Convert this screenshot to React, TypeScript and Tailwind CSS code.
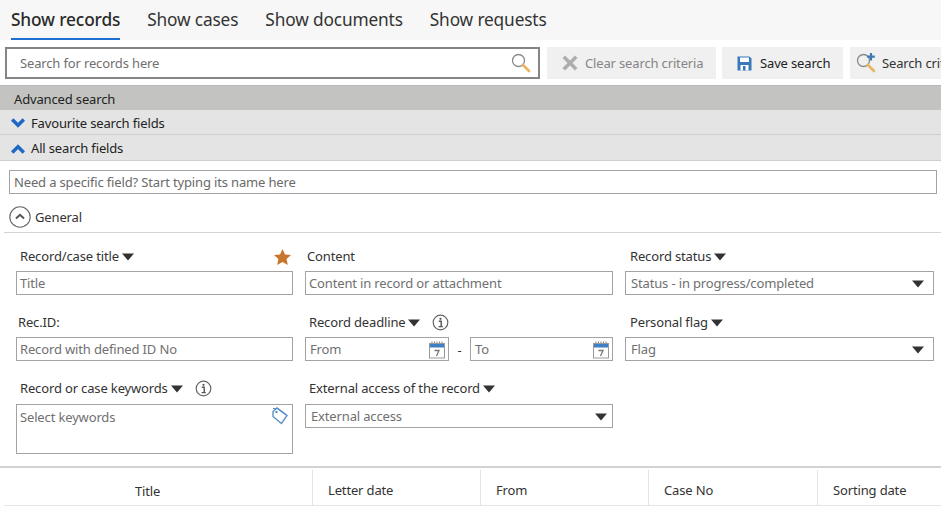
import React from "react";

const Caret = ({ className = "" }: { className?: string }) => (
  <svg width="12" height="8" viewBox="0 0 12 8" className={`shrink-0 ${className}`}>
    <path d="M0 0.5H12L6 7.5Z" fill="#333" />
  </svg>
);

const Info = () => (
  <svg width="17" height="17" viewBox="0 0 17 17" fill="none">
    <circle cx="8.5" cy="8.5" r="7.3" stroke="#666" strokeWidth="1.2" />
    <circle cx="8.5" cy="4.8" r="1.1" fill="#555" />
    <path d="M6.8 7.2H9.2V12.2M6.6 12.6H10.8" stroke="#555" strokeWidth="1.4" />
  </svg>
);

const Calendar = () => (
  <svg width="16" height="18" viewBox="0 0 16 18" fill="none" className="shrink-0">
    <path d="M3 0.5V3M5.5 0.5V3M8 0.5V3M10.5 0.5V3M13 0.5V3" stroke="#777" strokeWidth="0.9" />
    <rect x="0.5" y="2.5" width="15" height="4" fill="#3f7fc6" />
    <rect x="0.5" y="2.5" width="15" height="14.5" stroke="#999" strokeWidth="1" />
    <path d="M5.5 9.5H10L7.5 15" stroke="#777" strokeWidth="1.3" />
  </svg>
);

const Magnifier = ({ plus = false }: { plus?: boolean }) => (
  <svg width="20" height="20" viewBox="0 0 20 20" fill="none" className="shrink-0">
    <circle cx="7.5" cy="7.5" r="6" stroke="#8a8a8a" strokeWidth="1.3" />
    <path d="M12 12L18 18" stroke="#e9b45c" strokeWidth="2.6" strokeLinecap="round" />
    {plus && <path d="M15 0V7.5M11.2 3.7H18.8" stroke="#3c78b8" strokeWidth="2.2" />}
  </svg>
);

const Field = ({
  label,
  after,
  children,
}: {
  label: string;
  after?: React.ReactNode;
  children: React.ReactNode;
}) => (
  <div className="flex flex-col">
    <div className="mb-[3px] flex h-6 items-center gap-[3px] pl-[4px] pt-[1px]">
      <span>{label}</span>
      {after}
    </div>
    {children}
  </div>
);

const Box = ({ text, right }: { text: string; right?: React.ReactNode }) => (
  <div className="flex h-6 items-center justify-between border border-[#a3a3a3] bg-white pl-[3px] pr-[9px] pt-[1px] text-[#707070]">
    <span>{text}</span>
    {right}
  </div>
);

const SelectBox = ({ text }: { text: string }) => (
  <div className="flex h-6 items-center justify-between border border-[#a3a3a3] bg-white pl-[5px] pr-[9px] pt-[1px] text-[#707070]">
    <span>{text}</span>
    <Caret />
  </div>
);

export default function App() {
  return (
    <div
      className="h-[530px] w-[941px] overflow-hidden bg-white text-[13px] leading-none tracking-[-0.15px] text-[#333]"
      style={{ fontFamily: '"Noto Sans", "Open Sans", sans-serif' }}
    >
      <div className="flex h-10 gap-[27px] bg-[#f7f7f7] pl-[11px] text-[17.3px]">
        <div className="flex h-10 items-center border-b-2 border-[#1f6fd0] pt-[1px] font-medium text-[#2a2a2a]">Show records</div>
        <div className="flex h-10 items-center">Show cases</div>
        <div className="flex h-10 items-center">Show documents</div>
        <div className="flex h-10 items-center">Show requests</div>
      </div>

      <div className="flex h-[45px] items-center pl-[5px]">
        <div className="flex h-[32px] w-[535px] items-center justify-between border-2 border-[#858585] pl-[13px] pr-[7px] pt-[1px] text-[#707070]">
          <span>Search for records here</span>
          <Magnifier />
        </div>
        <div className="ml-[7px] flex h-[32px] w-[169px] items-center gap-[7px] bg-[#f0f0f0] pl-[15px] pt-[1px] text-[#858585]">
          <svg width="16" height="16" viewBox="0 0 16 16" className="shrink-0">
            <path d="M3 0.5L8 5.5L13 0.5L15.5 3L10.5 8L15.5 13L13 15.5L8 10.5L3 15.5L0.5 13L5.5 8L0.5 3Z" fill="#aeaeae" />
          </svg>
          <span>Clear search criteria</span>
        </div>
        <div className="ml-[6px] flex h-[32px] w-[121px] items-center gap-2 bg-[#f0f0f0] pl-[15px] pt-[1px] text-[#222]">
          <svg width="15" height="15" viewBox="0 0 15 15" className="shrink-0">
            <path d="M0.5 0.5H12.5L14.5 2.5V14.5H0.5Z" fill="#3b78b9" />
            <rect x="3" y="1.5" width="9" height="4.5" fill="#fff" />
            <rect x="3.5" y="9" width="8" height="5.5" fill="#fff" />
            <rect x="6" y="10" width="2.5" height="4.5" fill="#3b78b9" />
          </svg>
          <span>Save search</span>
        </div>
        <div className="ml-[7px] flex h-[32px] flex-1 items-center gap-[6px] overflow-hidden whitespace-nowrap bg-[#f0f0f0] pl-[6px] pt-[1px]">
          <Magnifier plus />
          <span>Search criteria</span>
        </div>
      </div>

      <div className="flex h-[25px] items-center border-t border-[#b8b8b5] bg-[#c3c4c1] pl-[14px] pt-[2px] text-[#222]">Advanced search</div>
      <div className="flex h-[25px] items-center gap-[6px] border-b border-[#cfcfcf] bg-[#e4e4e4] pl-[11px] pt-[2px] text-[#222]">
        <svg width="14" height="10" viewBox="0 0 14 10" fill="none" className="shrink-0">
          <path d="M1.2 1.5L7 7.3L12.8 1.5" stroke="#1d69c4" strokeWidth="3.4" />
        </svg>
        <span>Favourite search fields</span>
      </div>
      <div className="flex h-[26px] items-center gap-[6px] border-b border-[#cfcfcf] bg-[#e4e4e4] pl-[11px] pt-[2px] text-[#222]">
        <svg width="14" height="10" viewBox="0 0 14 10" fill="none" className="shrink-0">
          <path d="M1.2 8.5L7 2.7L12.8 8.5" stroke="#1d69c4" strokeWidth="3.4" />
        </svg>
        <span>All search fields</span>
      </div>

      <div className="ml-[9px] mt-[9px] flex h-6 w-[928px] items-center border border-[#a3a3a3] pl-1 pt-[1px] text-[#6a6a6a]">
        Need a specific field? Start typing its name here
      </div>

      <div className="ml-1 mt-[12px] flex h-[27px] items-start gap-1 border-b border-[#d4d4d4] pl-[5px]">
        <svg width="22" height="22" viewBox="0 0 22 22" fill="none" className="shrink-0">
          <circle cx="11" cy="11" r="10.2" stroke="#666" strokeWidth="1.1" />
          <path d="M7 12.5L11 8.8L15 12.5" stroke="#555" strokeWidth="2" />
        </svg>
        <span className="pt-[5px] text-[#333]">General</span>
      </div>

      <div className="grid grid-cols-[277px_308px_309px] gap-x-3 gap-y-[15px] pl-4 pt-[11px]">
        <Field
          label="Record/case title"
          after={
            <>
              <Caret />
              <svg width="17" height="16" viewBox="0 0 17 16" className="ml-auto mr-[2px] shrink-0">
                <path d="M8.5 0L11 5.4L17 6.1L12.6 10.1L13.8 16L8.5 13L3.2 16L4.4 10.1L0 6.1L6 5.4Z" fill="#c8752e" />
              </svg>
            </>
          }
        >
          <Box text="Title" />
        </Field>
        <div className="flex flex-col">
          <div className="mb-[3px] flex h-6 items-center pl-[2px] pt-[1px]">Content</div>
          <Box text="Content in record or attachment" />
        </div>
        <div className="flex flex-col">
          <div className="mb-[3px] flex h-6 items-center gap-[3px] pl-[5px] pt-[1px]">
            <span>Record status</span>
            <Caret />
          </div>
          <SelectBox text="Status - in progress/completed" />
        </div>

        <div className="flex flex-col">
          <div className="mb-[3px] flex h-6 items-center pl-[2px] pt-[1px]">Rec.ID:</div>
          <Box text="Record with defined ID No" />
        </div>
        <Field
          label="Record deadline"
          after={
            <>
              <Caret />
              <span className="ml-[9px] flex"><Info /></span>
            </>
          }
        >
          <div className="flex items-center">
            <div className="flex h-6 w-[144px] items-center justify-between border border-[#a3a3a3] pl-1 pr-[3px] pt-[1px] text-[#707070]">
              <span>From</span>
              <Calendar />
            </div>
            <span className="w-[21px] pt-[3px] text-center">-</span>
            <div className="flex h-6 w-[143px] items-center justify-between border border-[#a3a3a3] pl-1 pr-[3px] pt-[1px] text-[#707070]">
              <span>To</span>
              <Calendar />
            </div>
          </div>
        </Field>
        <div className="flex flex-col">
          <div className="mb-[3px] flex h-6 items-center gap-[3px] pl-[5px] pt-[1px]">
            <span>Personal flag</span>
            <Caret />
          </div>
          <SelectBox text="Flag" />
        </div>

        <Field
          label="Record or case keywords"
          after={
            <>
              <Caret />
              <span className="ml-[9px] flex"><Info /></span>
            </>
          }
        >
          <div className="mt-[1px] flex h-[50px] items-start justify-between border border-[#a3a3a3] pl-[3px] pr-[4px] pt-[6px] text-[#707070]">
            <span>Select keywords</span>
            <svg width="16" height="18" viewBox="0 0 16 18" fill="none" className="-mt-[4px] shrink-0">
              <path d="M1 4.5L5 1L15 8.5L9.5 16.5L1 9.5Z" stroke="#5b8fc7" strokeWidth="1.4" fill="#fff" />
              <path d="M1 1.5H5.5L13 7" stroke="#5b8fc7" strokeWidth="1.2" />
              <circle cx="4.5" cy="5" r="1.2" fill="#5b8fc7" />
            </svg>
          </div>
        </Field>
        <Field label="External access of the record" after={<Caret />}>
          <div className="mt-[1px] flex h-6 items-center justify-between border border-[#a3a3a3] pl-[5px] pr-[5px] pt-[1px] text-[#707070]">
            <span>External access</span>
            <Caret />
          </div>
        </Field>
        <div />
      </div>

      <div className="mt-[12px] flex h-[38px] border-t-2 border-[#d2d2d2] pt-[2px]">
        <div className="ml-1 flex h-[36px] w-full border-b border-[#e6e6e6]">
          <div className="flex w-[309px] items-center justify-center border-r border-[#e4e4e4] pr-[21px] pt-[7px]">Title</div>
          <div className="flex w-[168px] items-center border-r border-[#e4e4e4] pl-[15px] pt-[6px]">Letter date</div>
          <div className="flex w-[168px] items-center border-r border-[#e4e4e4] pl-[15px] pt-[6px]">From</div>
          <div className="flex w-[169px] items-center border-r border-[#e4e4e4] pl-[15px] pt-[6px]">Case No</div>
          <div className="flex flex-1 items-center pl-[15px] pt-[6px]">Sorting date</div>
        </div>
      </div>
    </div>
  );
}
